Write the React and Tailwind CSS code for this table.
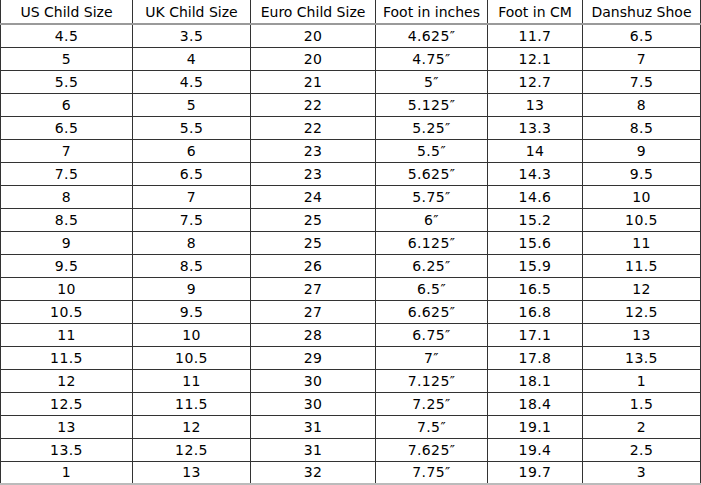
const headers = ['US Child Size', 'UK Child Size', 'Euro Child Size', 'Foot in inches', 'Foot in CM', 'Danshuz Shoe']
const widths = ['w-[132px]', 'w-[118px]', 'w-[125px]', 'w-[112px]', 'w-[95px]', 'w-[118px]']

const rows = [
  ['4.5', '3.5', '20', '4.625″', '11.7', '6.5'],
  ['5', '4', '20', '4.75″', '12.1', '7'],
  ['5.5', '4.5', '21', '5″', '12.7', '7.5'],
  ['6', '5', '22', '5.125″', '13', '8'],
  ['6.5', '5.5', '22', '5.25″', '13.3', '8.5'],
  ['7', '6', '23', '5.5″', '14', '9'],
  ['7.5', '6.5', '23', '5.625″', '14.3', '9.5'],
  ['8', '7', '24', '5.75″', '14.6', '10'],
  ['8.5', '7.5', '25', '6″', '15.2', '10.5'],
  ['9', '8', '25', '6.125″', '15.6', '11'],
  ['9.5', '8.5', '26', '6.25″', '15.9', '11.5'],
  ['10', '9', '27', '6.5″', '16.5', '12'],
  ['10.5', '9.5', '27', '6.625″', '16.8', '12.5'],
  ['11', '10', '28', '6.75″', '17.1', '13'],
  ['11.5', '10.5', '29', '7″', '17.8', '13.5'],
  ['12', '11', '30', '7.125″', '18.1', '1'],
  ['12.5', '11.5', '30', '7.25″', '18.4', '1.5'],
  ['13', '12', '31', '7.5″', '19.1', '2'],
  ['13.5', '12.5', '31', '7.625″', '19.4', '2.5'],
  ['1', '13', '32', '7.75″', '19.7', '3'],
]

export default function App() {
  return (
    <div className="bg-white w-[701px] h-[485px] overflow-hidden">
      <table className="table-fixed border-collapse w-[701px] text-black text-[14px] leading-none font-['Comic_Sans_MS','DejaVu_Sans',sans-serif] border-b-2 border-b-[#bbb]">
        <thead>
          <tr className="h-[24px] border-b-2 border-b-[#9a9a9a]">
            {headers.map((h, i) => (
              <th key={h} className={`${widths[i]} font-normal text-center whitespace-nowrap border-x border-[#333]`}>
                {h}
              </th>
            ))}
          </tr>
        </thead>
        <tbody>
          {rows.map((r, ri) => (
            <tr key={ri} className="h-[23px] border-t border-[#333]">
              {r.map((c, ci) => (
                <td key={ci} className="text-center tracking-[0.4px] border-x border-[#333]">{c}</td>
              ))}
            </tr>
          ))}
        </tbody>
      </table>
    </div>
  )
}
